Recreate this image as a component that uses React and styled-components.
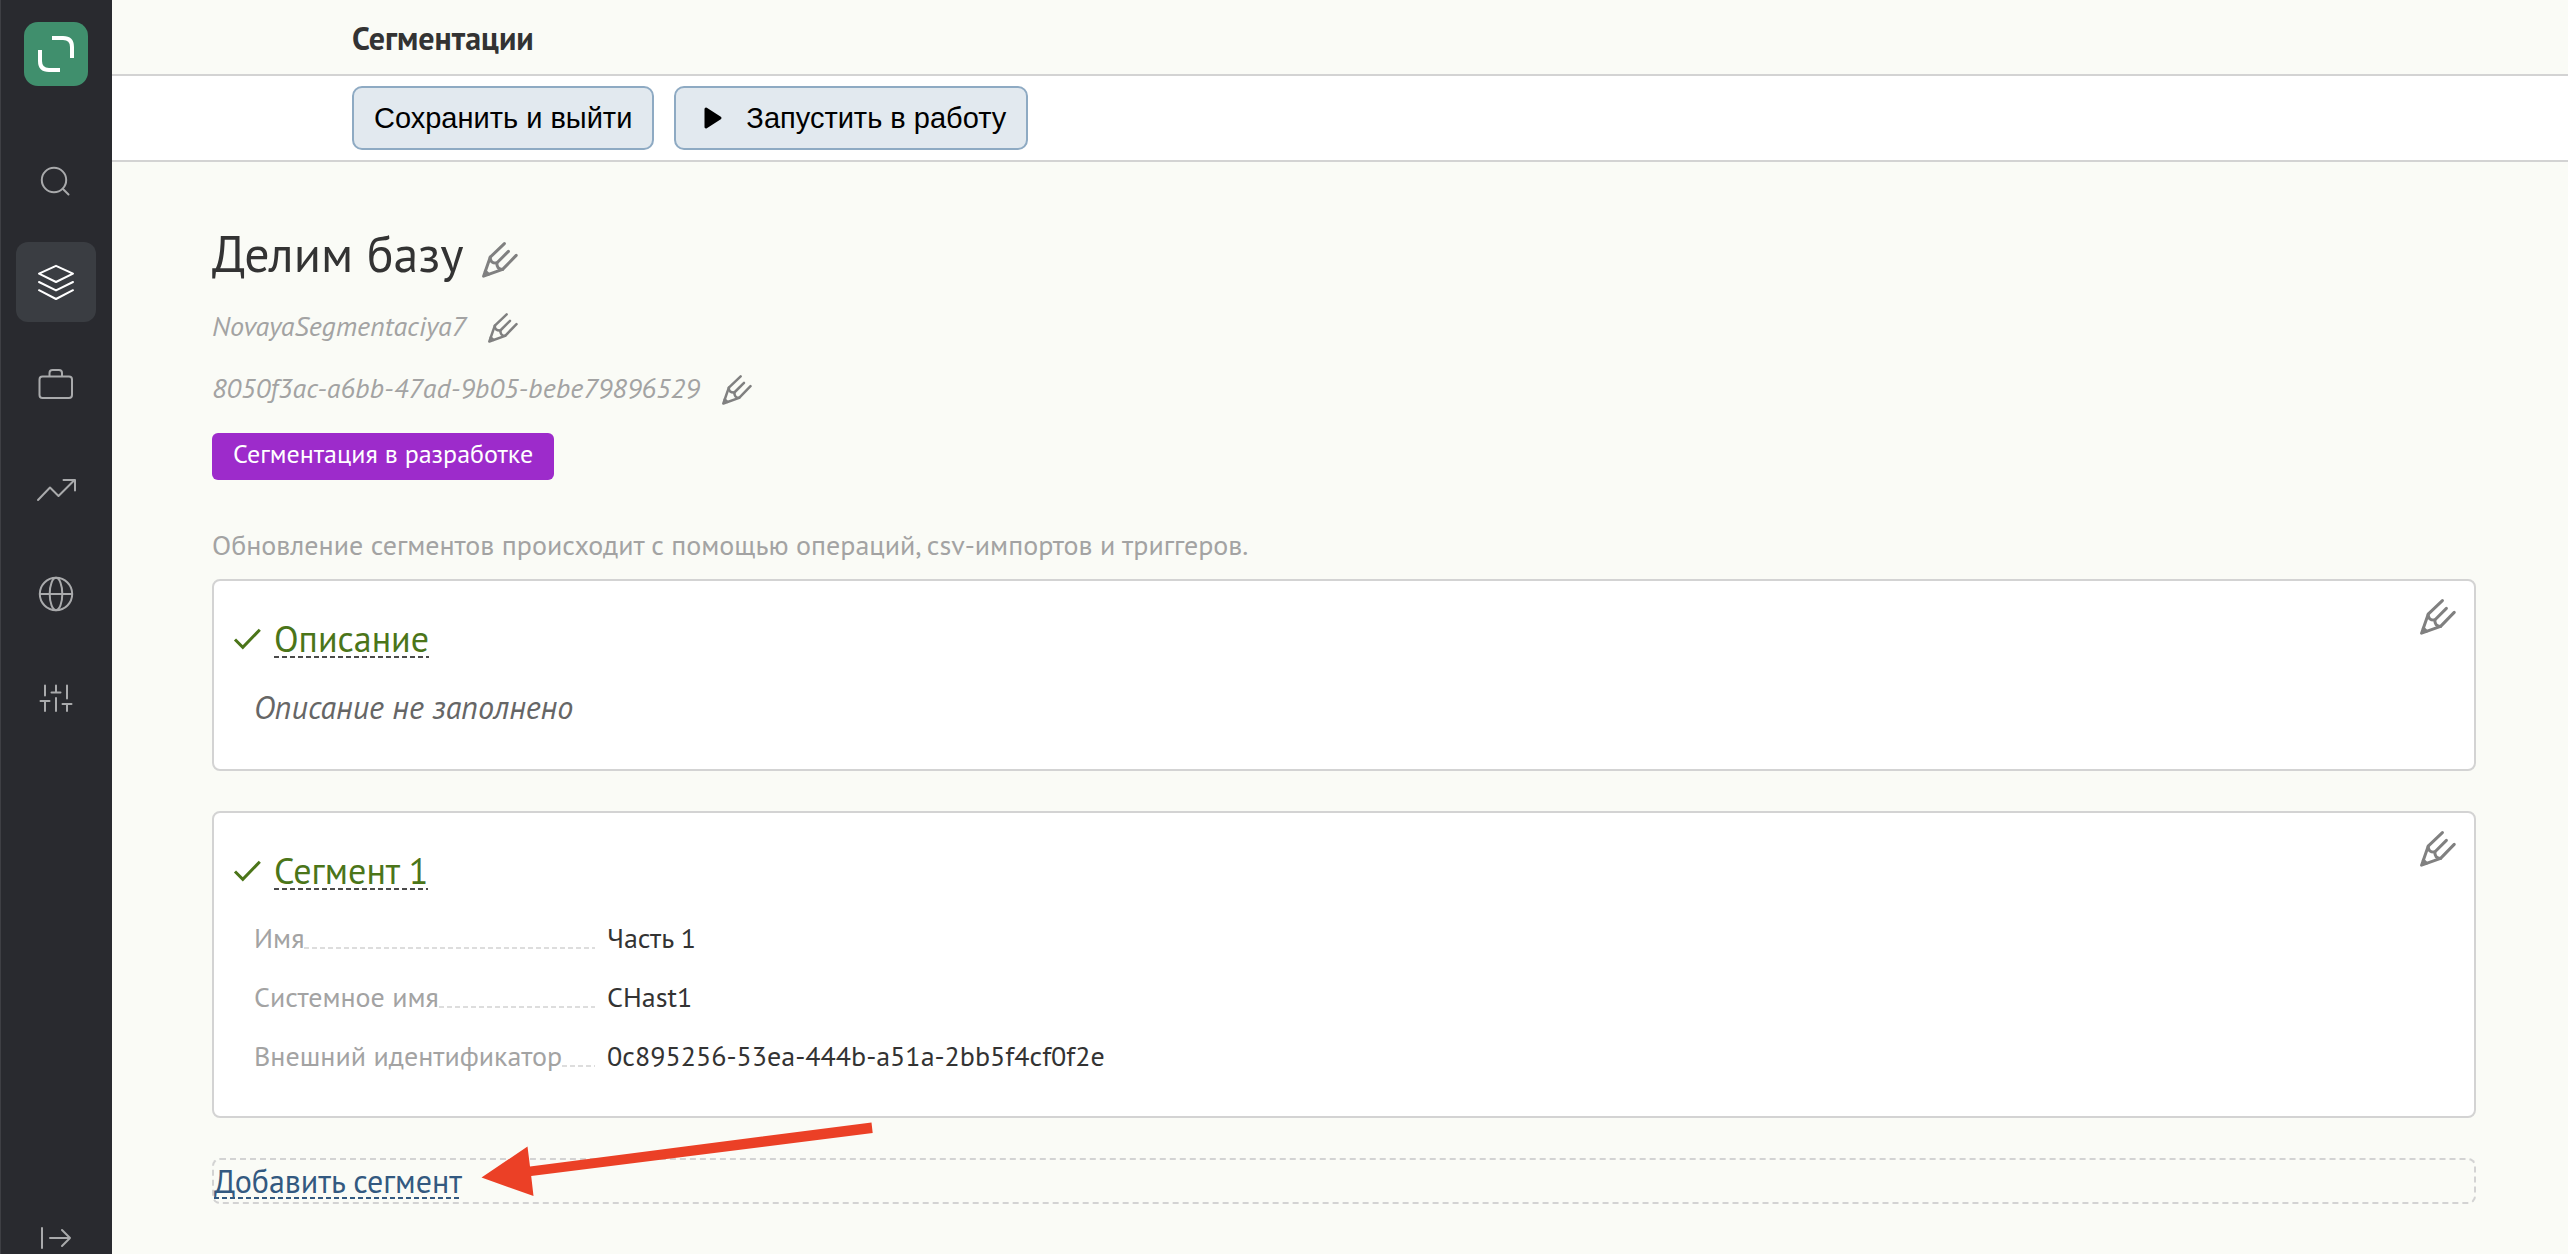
import React from "react";
import styled, { createGlobalStyle, css } from "styled-components";

const color = {
  page: "#fafbf6",
  sidebar: "#292a2f",
  line: "#d3d3d3",
  text: "#333333",
  muted: "#a3a3a3",
  icon: "#808080",
  green: "#4b7519",
  blue: "#335980",
};

const GlobalStyle = createGlobalStyle`
  *, *::before, *::after { box-sizing: border-box; }
  body {
    margin: 0;
    background: ${color.page};
    color: ${color.text};
    font-family: "PT Sans", "Noto Sans", sans-serif;
    font-size: 28px;
  }
  h1, h2, p, dl, dd, dt { margin: 0; font-weight: 400; }
  button { font: inherit; color: inherit; cursor: pointer; }
`;

const plainButton = css`
  padding: 0;
  border: 0;
  background: none;
`;

const dashedLine = (c, top) => css`
  background: repeating-linear-gradient(90deg, ${c} 0 5px, transparent 5px 8px)
    0 ${top} / 100% 2px no-repeat;
`;

const Layout = styled.div`
  display: flex;
  min-height: 100vh;
`;

const Sidebar = styled.aside`
  flex: none;
  width: 112px;
  padding-top: 22px;
  display: flex;
  flex-direction: column;
  align-items: center;
  background: ${color.sidebar};
  box-shadow: inset 1px 0 #3e3f44;
`;

const Logo = styled.a`
  display: block;
  width: 64px;
  height: 64px;
  border-radius: 14px;
  background: #408f6d;
`;

const Nav = styled.nav`
  flex: 1;
  margin-top: 52px;
  display: flex;
  flex-direction: column;
  gap: 24px;
`;

const NavItem = styled.a`
  width: 80px;
  height: 80px;
  display: flex;
  align-items: center;
  justify-content: center;
  border-radius: 12px;
  color: ${(p) => (p.$active ? "#ffffff" : "#a9aaac")};
  background: ${(p) => (p.$active ? "#3a3d42" : "transparent")};
`;

const Expand = styled.button`
  ${plainButton}
  display: flex;
  color: #a9aaac;
`;

const Svg = styled.svg`
  display: block;
  fill: none;
  stroke: currentColor;
  stroke-width: 2;
  stroke-linecap: round;
  stroke-linejoin: round;
`;

const PencilSvg = styled(Svg)`
  stroke-width: 3;
`;

const CheckSvg = styled(Svg)`
  color: ${color.green};
  stroke-width: 3;
  stroke-linecap: butt;
  stroke-linejoin: miter;
`;

const Main = styled.main`
  flex: 1;
  min-width: 0;
`;

const Header = styled.header`
  height: 76px;
  padding: 2px 240px 0;
  border-bottom: 2px solid ${color.line};
  font-size: 32px;
  font-weight: 700;
  line-height: 72px;
`;

const Toolbar = styled.div`
  display: flex;
  gap: 20px;
  padding: 10px 240px;
  border-bottom: 2px solid ${color.line};
  background: #ffffff;
`;

const ToolButton = styled.button`
  display: flex;
  align-items: center;
  height: 64px;
  padding: 0 20px;
  border: 2px solid #8eaac3;
  border-radius: 10px;
  background: #e2e9ef;
  color: #000000;
  font-family: "Liberation Sans", Arial, sans-serif;
  font-size: 29px;
`;

const PlayIcon = styled.svg`
  margin: 0 22px 0 6px;
`;

const Content = styled.div`
  padding: 60px 92px 50px 100px;
`;

const EditLine = styled.div`
  display: flex;
  align-items: center;
`;

const TitleLine = styled(EditLine)`
  gap: 18px;
`;

const IdLine = styled(EditLine)`
  margin-top: ${(p) => (p.$first ? "20px" : "22px")};
  gap: 22px;
`;

const Title = styled.h1`
  font-size: 50px;
  line-height: 64px;
`;

const IdText = styled.p`
  color: ${color.muted};
  font-style: italic;
  line-height: 40px;
`;

const EditButton = styled.button`
  ${plainButton}
  display: flex;
  margin-top: ${(p) => (p.$drop ? "12px" : "4px")};
  color: ${color.icon};
`;

const Status = styled.span`
  display: inline-block;
  margin-top: 25px;
  padding: 0 21px 6px;
  border-radius: 6px;
  background: #9d2bcb;
  color: #ffffff;
  font-size: 26px;
  line-height: 41px;
  vertical-align: top;
`;

const Note = styled.p`
  margin: 45px 0 14px;
  color: ${color.muted};
  line-height: 40px;
`;

const Card = styled.section`
  position: relative;
  margin-bottom: 40px;
  padding: 38px 40px 31px;
  border: 2px solid ${color.line};
  border-radius: 8px;
  background: #ffffff;
`;

const CardEdit = styled(EditButton)`
  position: absolute;
  top: 18px;
  right: 18px;
  margin: 0;
`;

const CardHead = styled.div`
  display: flex;
  align-items: center;
  gap: 13px;
  margin: 0 0 17px -21px;
`;

const CardTitle = styled.h2`
  font-size: 36px;
`;

const TitleButton = styled.button`
  ${plainButton}
  display: block;
  line-height: 40px;
  color: ${color.green};
  ${dashedLine("#4a4a4a", "37px")}
`;

const Empty = styled.p`
  color: #666666;
  font-size: 32px;
  font-style: italic;
  line-height: 62px;
`;

const Field = styled.div`
  display: flex;
  gap: 12px;
  line-height: 59px;
`;

const FieldName = styled.dt`
  flex: none;
  width: 341px;
  display: flex;
  color: ${color.muted};

  &::after {
    content: "";
    flex: 1;
    ${dashedLine("#dddddd", "39px")}
  }
`;

const AddBox = styled.div`
  position: relative;
  border: 2px dashed ${color.line};
  border-radius: 8px;
`;

const AddButton = styled.button`
  ${plainButton}
  display: block;
  color: ${color.blue};
  font-size: 32px;
  line-height: 42px;
  ${dashedLine("#335980", "37px")}
`;

const Pointer = styled.svg`
  position: absolute;
  left: 266px;
  top: -40px;
  pointer-events: none;
`;

const Pencil = ({ size = 36 }) => (
  <PencilSvg width={size} height={size} viewBox="0 0 36 36">
    <path d="M22.4 1.6 8.2 15.2 1.6 34.2 20.6 27.4 34.2 13.4" />
    <path d="M26.4 9.4 14.8 21" />
    <path d="M8.2 15.2C8 19.5 10.5 21.3 14.8 21 14.8 25 16.5 27.5 20.6 27.4" />
    <path d="M3.3 29.2 6.4 32.2" />
  </PencilSvg>
);

const navIcons = [
  {
    label: "Поиск",
    shape: (
      <>
        <circle cx="18" cy="22" r="12.2" />
        <path d="m27 31 5.5 5.5" />
      </>
    ),
  },
  {
    label: "Сегментации",
    active: true,
    shape: (
      <path d="M20 3.8 37 11.7 20 20 3 11.7ZM3 20 20 28.4 37 20M3 28.2 20 37 37 28.2" />
    ),
  },
  {
    label: "Продукты",
    shape: (
      <>
        <rect x="3.5" y="10.5" width="32.5" height="21.5" rx="3" />
        <path d="M13.5 10V7Q13.5 4 16.5 4H23Q26 4 26 7V10" />
      </>
    ),
  },
  {
    label: "Отчёты",
    shape: <path d="M2 30 14 17.5 22.5 26 38.5 10M27.5 10H39V20.5" />,
  },
  {
    label: "Сайты",
    shape: (
      <>
        <circle cx="20" cy="20" r="16.2" />
        <ellipse cx="20" cy="20" rx="6.3" ry="16.2" />
        <path d="M4 20H36" />
      </>
    ),
  },
  {
    label: "Настройки",
    shape: (
      <path d="M9 7.5V17.5M4.5 23H13.5M9 23V33M20 7.5V14.5M15.5 14.5H24.5M20 20V33M31 7.5V20.5M26.5 26H35.5M31 26V33" />
    ),
  },
];

const cards = [
  { title: "Описание", empty: "Описание не заполнено" },
  {
    title: "Сегмент 1",
    fields: [
      ["Имя", "Часть 1"],
      ["Системное имя", "CHast1"],
      ["Внешний идентификатор", "0c895256-53ea-444b-a51a-2bb5f4cf0f2e"],
    ],
  },
];

function SegmentCard({ title, empty, fields }) {
  return (
    <Card>
      <CardHead>
        <CheckSvg width="28" height="24" viewBox="0 0 28 24">
          <path d="M2 12.5 9.8 20.3 26.8 2.8" />
        </CheckSvg>
        <CardTitle>
          <TitleButton type="button">{title}</TitleButton>
        </CardTitle>
      </CardHead>
      {empty && <Empty>{empty}</Empty>}
      {fields && (
        <dl>
          {fields.map(([name, value]) => (
            <Field key={name}>
              <FieldName>{name}</FieldName>
              <dd>{value}</dd>
            </Field>
          ))}
        </dl>
      )}
      <CardEdit type="button" aria-label="Редактировать">
        <Pencil />
      </CardEdit>
    </Card>
  );
}

export default function App() {
  return (
    <Layout>
      <GlobalStyle />
      <Sidebar>
        <Logo href="#" aria-label="Главная">
          <svg width="64" height="64" viewBox="0 0 64 64" fill="none" stroke="#fff" strokeWidth="4">
            <path d="M28 16H39Q48 16 48 25V36M16 28V39Q16 48 25 48H36" />
          </svg>
        </Logo>
        <Nav>
          {navIcons.map(({ label, active, shape }) => (
            <NavItem key={label} href="#" aria-label={label} $active={active}>
              <Svg width="40" height="40" viewBox="0 0 40 40">
                {shape}
              </Svg>
            </NavItem>
          ))}
        </Nav>
        <Expand type="button" aria-label="Развернуть меню">
          <Svg width="32" height="32" viewBox="0 0 32 32">
            <path d="M2 6V26M10 16H30M22 8 30 16 22 24" />
          </Svg>
        </Expand>
      </Sidebar>
      <Main>
        <Header>Сегментации</Header>
        <Toolbar>
          <ToolButton type="button">Сохранить и выйти</ToolButton>
          <ToolButton type="button">
            <PlayIcon width="22" height="24" viewBox="0 0 22 24">
              <path d="M4 3 18 12 4 21Z" fill="#000" stroke="#000" strokeWidth="3" strokeLinejoin="round" />
            </PlayIcon>
            Запустить в работу
          </ToolButton>
        </Toolbar>
        <Content>
          <TitleLine>
            <Title>Делим базу</Title>
            <EditButton type="button" aria-label="Изменить название" $drop>
              <Pencil />
            </EditButton>
          </TitleLine>
          <IdLine $first>
            <IdText>NovayaSegmentaciya7</IdText>
            <EditButton type="button" aria-label="Изменить системное имя">
              <Pencil size={30} />
            </EditButton>
          </IdLine>
          <IdLine>
            <IdText>8050f3ac-a6bb-47ad-9b05-bebe79896529</IdText>
            <EditButton type="button" aria-label="Изменить идентификатор">
              <Pencil size={30} />
            </EditButton>
          </IdLine>
          <Status>Сегментация в разработке</Status>
          <Note>Обновление сегментов происходит с помощью операций, csv-импортов и триггеров.</Note>
          {cards.map((card) => (
            <SegmentCard key={card.title} {...card} />
          ))}
          <AddBox>
            <AddButton type="button">Добавить сегмент</AddButton>
            <Pointer width="394" height="78" viewBox="0 0 394 78">
              <path d="M1.5 57.5 47.5 26.5 50 46.5 391.5 2.5 392.7 13 51.2 56 53.5 76Z" fill="#eb4026" />
            </Pointer>
          </AddBox>
        </Content>
      </Main>
    </Layout>
  );
}
